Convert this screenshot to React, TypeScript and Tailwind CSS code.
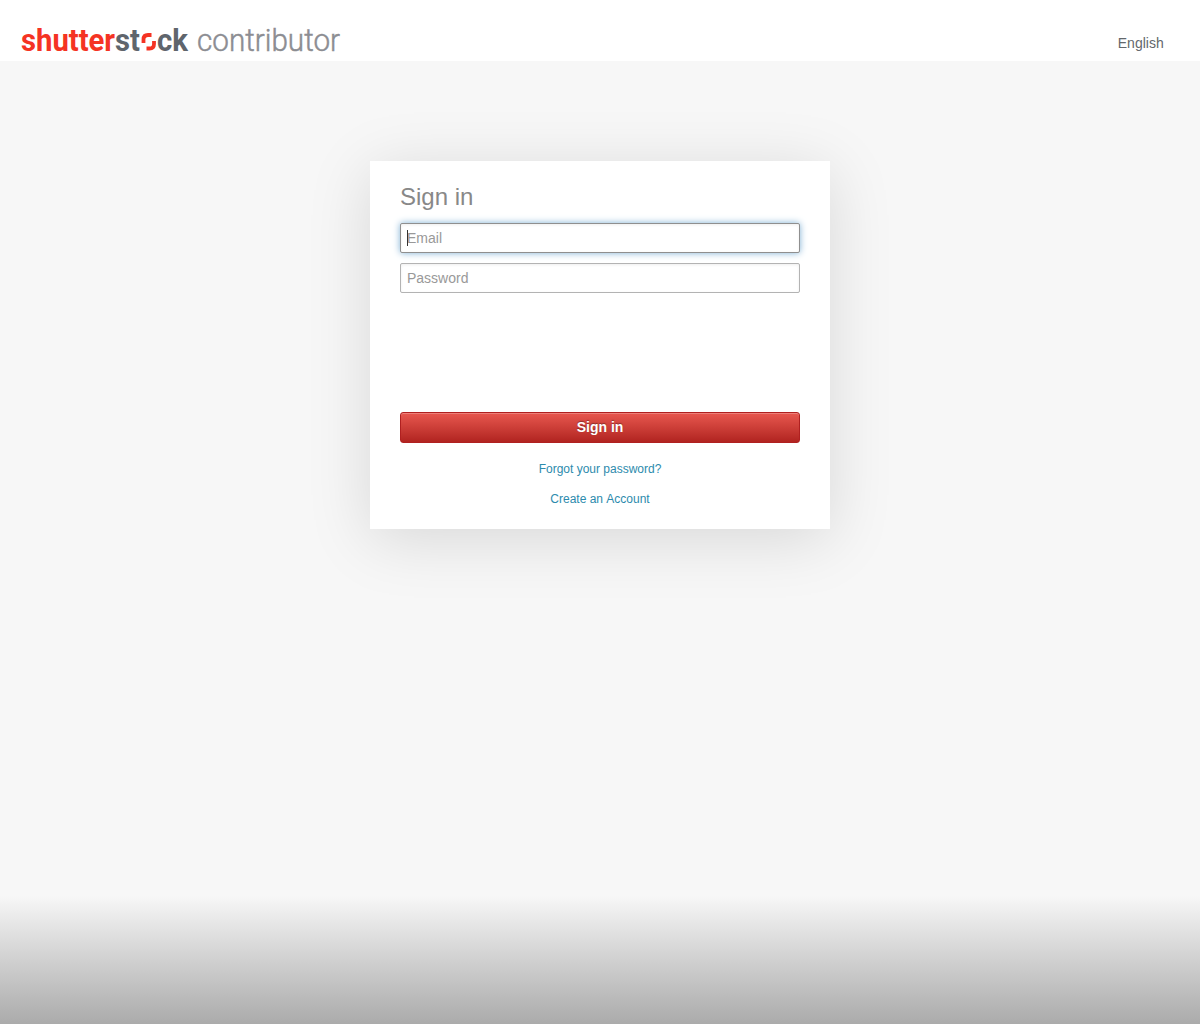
import React from "react";

function Logo() {
  return (
    <svg
      width="330"
      height="40"
      viewBox="0 0 330 40"
      className="block font-['Roboto',sans-serif]"
      role="img"
      aria-label="shutterstock contributor"
    >
      <g fontSize="32" fontWeight="700">
        <text x="0" y="31" fill="#f53323" textLength="119" lengthAdjust="spacingAndGlyphs">
          shutter<tspan fill="#5f656c">st</tspan>
        </text>
        <text x="136" y="31" fill="#5f656c" textLength="31" lengthAdjust="spacingAndGlyphs">
          ck
        </text>
      </g>
      <g fill="none" stroke="#f53323" strokeWidth="3.8">
        <path d="M122.500 23v-3.500q0-4.500 4.500-4.500h3.500" />
        <path d="M133 21v3q0 4.500-4.500 4.500h-3" />
      </g>
      <text
        x="176"
        y="31"
        fill="#8c8d92"
        stroke="#8c8d92"
        strokeWidth="0.5"
        fontSize="32"
        fontWeight="300"
        textLength="143"
        lengthAdjust="spacingAndGlyphs"
      >
        contributor
      </text>
    </svg>
  );
}

const field =
  "block h-[30px] w-full rounded-[2px] border bg-white px-1.5 text-sm text-[#333] outline-none placeholder:text-[#999]";

export default function App() {
  return (
    <div className="relative h-screen overflow-hidden bg-[#f7f7f7] font-['Liberation_Sans',Arial,sans-serif]">
      <header className="flex h-[61px] items-start justify-between bg-white pt-5 pr-[36.3px] pl-[21px]">
        <Logo />
        <a href="#" className="pt-[13px] text-sm leading-5 text-[#63676b]">
          English
        </a>
      </header>
      <main className="mx-auto mt-[100px] h-[368px] w-[460px] bg-white px-[30px] pt-4 shadow-[0_10px_60px_rgba(0,0,0,0.13)]">
        <h1 className="text-2xl leading-10 text-[#888]">Sign in</h1>
        <form className="pt-1.5" onSubmit={(e) => e.preventDefault()}>
          <div className="relative">
            <input
              type="email"
              placeholder="Email"
              aria-label="Email"
              className={`${field} border-[#8f8f8f] shadow-[inset_0_1px_3px_#eee,0_0_7px_#7fb0d4]`}
            />
            <span className="absolute top-[7px] left-[7px] h-4 w-px bg-[#333]" />
          </div>
          <input
            type="password"
            placeholder="Password"
            aria-label="Password"
            className={`${field} mt-2.5 border-[#b3b3b3] shadow-[inset_0_1px_3px_#eee]`}
          />
          <button
            type="submit"
            className="mt-[119px] block h-[31px] w-full rounded-[3px] border border-[#b02020] bg-linear-to-b from-[#e8574f] to-[#b12320] text-sm leading-[29px] font-bold text-white shadow-[inset_0_1px_0_rgba(255,255,255,0.25)] [text-shadow:0_-1px_1px_rgba(0,0,0,0.35)]"
          >
            Sign in
          </button>
        </form>
        <nav className="flex flex-col items-center gap-2.5 pt-4 text-xs leading-5 text-[#2d8bad] [font-kerning:none]">
          <a href="#">Forgot your password?</a>
          <a href="#">Create an Account</a>
        </nav>
      </main>
      <div className="absolute inset-x-0 bottom-0 h-[128px] bg-linear-to-b from-[#f7f7f7] to-[#ababab]" />
    </div>
  );
}
